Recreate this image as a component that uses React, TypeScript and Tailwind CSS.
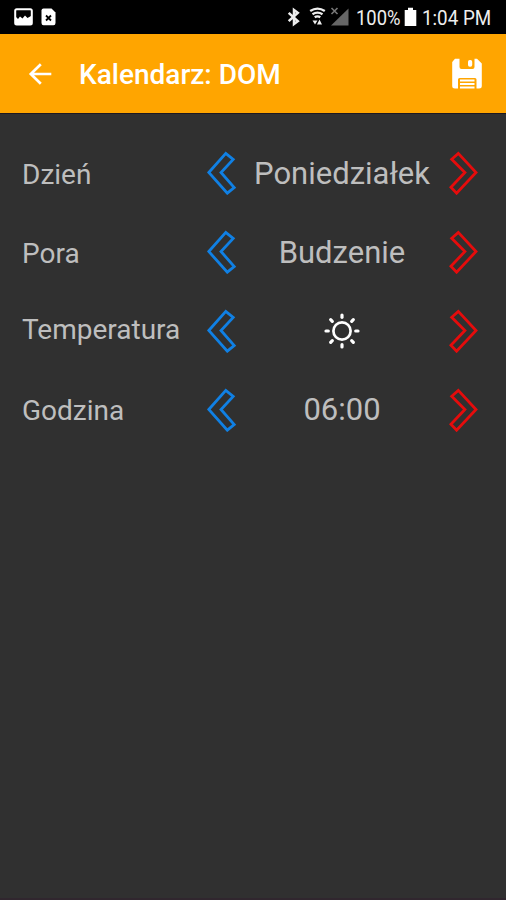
import type { ReactNode } from 'react';

type Row = {
  label: string;
  value: ReactNode;
  labelClass: string;
};

const rows: Row[] = [
  { label: 'Dzień', value: <span className="pt-0.5">Poniedziałek</span>, labelClass: 'pt-[3px]' },
  { label: 'Pora', value: <span className="pt-0.5">Budzenie</span>, labelClass: 'pt-[3px]' },
  { label: 'Temperatura', value: <SunIcon />, labelClass: 'pb-0.5' },
  { label: 'Godzina', value: <span className="pt-0.5">06:00</span>, labelClass: 'pt-[3px]' },
];

function SunIcon() {
  return (
    <svg className="h-9 w-9" viewBox="-18 -18 36 36" fill="none" stroke="#fff" strokeWidth="2.7" strokeLinecap="round">
      <circle r="8.6" />
      {[0, 45, 90, 135, 180, 225, 270, 315].map((angle) => (
        <path key={angle} d="M13.7 0H16" strokeWidth="3.2" transform={`rotate(${angle})`} />
      ))}
    </svg>
  );
}

function PrevIcon() {
  return (
    <svg className="h-11 w-[30px]" viewBox="0 0 30 44" fill="none" stroke="#1080e4" strokeWidth="2.8">
      <path d="M1.8 21.5L18.8 2.4L26.2 8.4L14 21.5L27.2 36.6L20.3 42.2Z" />
    </svg>
  );
}

function NextIcon() {
  return (
    <svg className="h-11 w-[30px]" viewBox="0 0 30 44" fill="none" stroke="#e50c0c" strokeWidth="2.8">
      <path d="M9.3 2.4L27 21.5L7.6 42.2L1.9 36.3L15.9 21.5L2.7 8.3Z" />
    </svg>
  );
}

function StatusBar() {
  return (
    <div className="flex h-[34px] items-center bg-black text-[20px] text-[#eee]">
      <svg className="ml-[14px] h-[18px] w-[19px]" viewBox="0 0 19 18">
        <rect x="1.2" y="1.2" width="16.6" height="15.2" rx="1.5" fill="none" stroke="#fff" strokeWidth="2" />
        <path d="M2 9L4 11L6 8.5L8.5 10.5L11 7.5L13.5 10L17 8V16H2Z" fill="#fff" />
      </svg>
      <svg className="ml-[8px] h-[18px] w-[15px]" viewBox="0 0 15 18">
        <path d="M2.5 .5H10.5L14.5 4.5V15Q14.5 17.3 12.5 17.3H2.5Q.5 17.3 .5 15V2.5Q.5 .5 2.5 .5Z" fill="#fff" />
        <path d="M5 7.5L10 12.5M10 7.5L5 12.5" stroke="#000" strokeWidth="1.8" />
      </svg>
      <svg className="ml-[231px] h-[20px] w-[14px]" viewBox="0 0 14 20" fill="none" stroke="#eee" strokeWidth="2.5">
        <path d="M1.7 5.8L10.8 14.2L7 17V3L10.8 5.8L1.7 14.2" />
      </svg>
      <svg className="ml-[8px] h-[20px] w-[17px]" viewBox="0 0 17 20" fill="none" stroke="#eee" strokeWidth="2.4">
        <path d="M1.2 4Q8.5 -.8 15.8 4M3.5 7.3Q8.5 4 13.5 7.3M5.7 10.3Q8.5 8.5 11.3 10.3" />
        <path d="M3.5 13.5H8.5L6 17.5ZM8 17.5H13L10.5 12.5Z" fill="#eee" stroke="none" />
      </svg>
      <svg className="ml-[4px] h-[20px] w-[20px]" viewBox="0 0 20 20">
        <path d="M18.5 1.5V18.5H1Z" fill="#666" />
        <path d="M1.5 1L7.5 7M7.5 1L1.5 7" stroke="#777" strokeWidth="1.6" />
      </svg>
      <span className="ml-[6px] w-[45px] origin-left scale-x-[0.92] whitespace-nowrap pt-[2px]">100%</span>
      <svg className="ml-[3px] h-[20px] w-[13px]" viewBox="0 0 13 20">
        <path d="M4 .8H9V3H12.3V19H.7V3H4Z" fill="#fff" />
      </svg>
      <span className="ml-[5px] w-[68px] origin-left scale-x-[0.94] whitespace-nowrap pt-[2px]">1:04 PM</span>
    </div>
  );
}

function Header() {
  return (
    <header className="flex h-20 items-center border-b border-[#1d1820] bg-[#ffa500] pr-[23px] pl-7">
      <svg className="h-6 w-6" viewBox="0 0 24 24" fill="none" stroke="#fff" strokeWidth="2.7">
        <path d="M23.3 12H2.5M12.8 2.2L2.8 12L12.8 21.8" />
      </svg>
      <h1 className="ml-[27px] flex-1 pt-[3px] text-[28px] font-medium text-white">Kalendarz: DOM</h1>
      <svg className="h-8 w-8" viewBox="0 0 32 32">
        <path
          d="M4 .8H8.5V9Q8.5 11 10.5 11H21.5Q23.5 11 23.5 9V.8H26L30.8 5.5V28Q30.8 30.5 28 30.5H25.5V21.5Q25.5 20 24 20H8.5Q7 20 7 21.5V30.5H4Q1.2 30.5 1.2 28V4Z"
          fill="#fff"
        />
        <rect x="17" y="2" width="4.2" height="6.8" rx="1.8" fill="#fff" />
        <path d="M9 22.5H23.5M9 26H23.5M9 29.5H23.5" stroke="#fff" strokeWidth="2" />
      </svg>
    </header>
  );
}

export default function App() {
  return (
    <div className="flex h-[900px] w-[506px] flex-col overflow-hidden border-b-2 border-[#30262e] bg-[#303030] font-['Roboto',sans-serif]">
      <StatusBar />
      <Header />
      <main className="pt-5">
        {rows.map((row) => (
          <div key={row.label} className="grid h-[78.75px] grid-cols-[185px_30px_212px_30px] items-center pl-[22px]">
            <span className={`text-[28px] text-[#bebebe] ${row.labelClass}`}>{row.label}</span>
            <PrevIcon />
            <span className="flex justify-center pr-0.5 text-[31px] text-[#bebebe]">{row.value}</span>
            <NextIcon />
          </div>
        ))}
      </main>
    </div>
  );
}
